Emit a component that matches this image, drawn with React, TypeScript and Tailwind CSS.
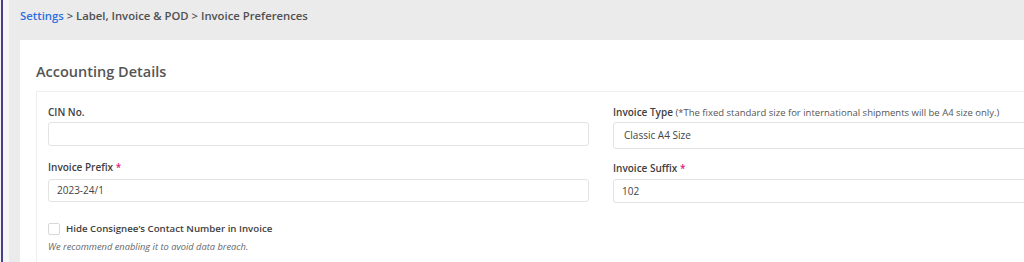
import React from "react";

export default function App() {
  const font = { fontFamily: '"Open Sans", "Noto Sans", sans-serif' };
  return (
    <div className="w-[1024px] h-[262px] overflow-hidden flex bg-[#ebebeb]" style={font}>
      <div className="w-[1px] shrink-0 bg-[#f4f4f6]" />
      <div className="w-[2px] shrink-0 bg-[#4b3f8c]" />
      <div className="w-[6px] shrink-0 bg-[#f6f6f6]" />
      <div className="flex-1 flex flex-col pl-[11px] min-w-0 overflow-hidden">
        <div className="h-[40px] shrink-0 flex items-start pt-[8px] text-[11.3px] font-semibold text-[#505050]">
          <span className="text-[#2f6fdc]">Settings</span>
          <span className="whitespace-pre"> &gt; Label, Invoice &amp; POD &gt; Invoice Preferences</span>
        </div>
        <div className="h-[222px] shrink-0 bg-white pl-[16px] pt-[22px] min-w-0">
          <h2 className="text-[14.5px] font-semibold text-[#555] leading-[20px]">Accounting Details</h2>
          <div className="mt-[9px] border-l border-t border-[#eeeeee] w-[1200px] pl-[11px] pt-[13px] pb-[20px]">
            <div className="grid grid-cols-[541px_541px] gap-x-[24px]">
              <div className="flex flex-col">
                <label className="text-[10px] font-semibold text-[#404040] leading-[14px] h-[17px]">CIN No.</label>
                <div className="h-[24px] border border-[#e3e3e3] rounded-[3px]" />
              </div>
              <div className="flex flex-col">
                <label className="text-[9.5px] text-[#555] leading-[14px] h-[17px] whitespace-nowrap">
                  <span className="font-semibold text-[#404040] text-[10px]">Invoice Type</span> (*The fixed standard size for international shipments will be A4 size only.)
                </label>
                <div className="h-[27px] border border-[#e3e3e3] rounded-[3px] flex items-center pl-[10px] text-[10px] text-[#444]">Classic A4 Size</div>
              </div>
              <div className="flex flex-col mt-[11px]">
                <label className="text-[10px] font-semibold text-[#404040] leading-[14px] h-[19px]">
                  Invoice Prefix <span className="text-[#e0187a]">*</span>
                </label>
                <div className="h-[23px] border border-[#e3e3e3] rounded-[3px] flex items-center pl-[8px] text-[10px] text-[#444]">2023-24/1</div>
              </div>
              <div className="flex flex-col mt-[12px]">
                <label className="text-[10px] font-semibold text-[#404040] leading-[14px] h-[18px]">
                  Invoice Suffix <span className="text-[#e0187a]">*</span>
                </label>
                <div className="h-[24px] border border-[#e3e3e3] rounded-[3px] flex items-center pl-[8px] text-[10px] text-[#444]">102</div>
              </div>
            </div>
            <div className="mt-[19px] flex items-center gap-[6px]">
              <div className="w-[12px] h-[12px] border border-[#d8d8d8] rounded-[2px] bg-white" />
              <span className="text-[9.7px] font-semibold text-[#404040]">Hide Consignee’s Contact Number in Invoice</span>
            </div>
            <div className="mt-[3px] text-[9.3px] italic text-[#666]">We recommend enabling it to avoid data breach.</div>
          </div>
        </div>
      </div>
    </div>
  );
}
